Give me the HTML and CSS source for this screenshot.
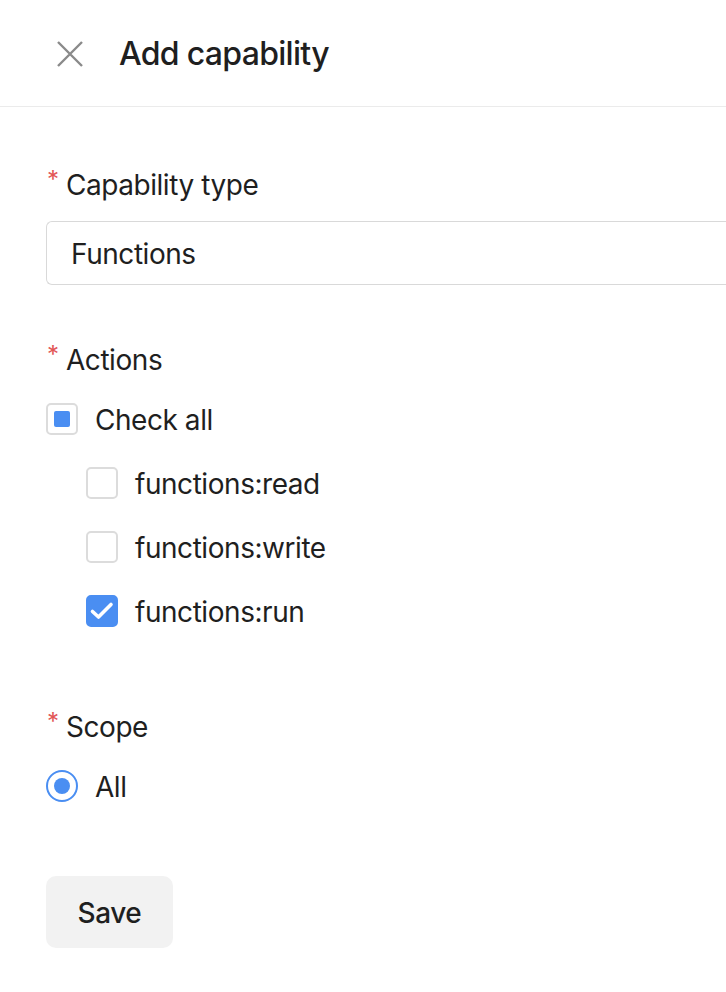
FILE: index.html
```html
<!DOCTYPE html>
<html lang="en">
<head>
<meta charset="utf-8">
<title>Add capability</title>
<link rel="stylesheet" href="styles.css">
</head>
<body>
<div class="panel">
  <header class="header">
    <button class="close" aria-label="Close">
      <svg width="26" height="26" viewBox="0 0 26 26"><path d="M1 1 L25 25 M25 1 L1 25" stroke="#8a8a8a" stroke-width="2.4" stroke-linecap="butt" fill="none"/></svg>
    </button>
    <h1 class="title">Add capability</h1>
  </header>
  <form class="form">
    <div class="item item-type">
      <div class="label"><span class="req">*</span>Capability type</div>
      <div class="select">Functions</div>
    </div>
    <div class="item item-actions">
      <div class="label"><span class="req">*</span>Actions</div>
      <div class="options">
        <label class="row"><span class="box indeterminate"><span class="dot-sq"></span></span><span>Check all</span></label>
        <div class="children">
          <label class="row"><span class="box"></span><span>functions:read</span></label>
          <label class="row"><span class="box"></span><span>functions:write</span></label>
          <label class="row"><span class="box checked"><svg width="32" height="32" viewBox="0 0 32 32"><path d="M6.5 16.5 L12.5 22 L25 9.5" stroke="#fff" stroke-width="3.6" fill="none" stroke-linecap="round" stroke-linejoin="round"/></svg></span><span>functions:run</span></label>
        </div>
      </div>
    </div>
    <div class="item item-scope">
      <div class="label"><span class="req">*</span>Scope</div>
      <div class="options">
        <label class="row"><span class="radio"><span class="radio-dot"></span></span><span>All</span></label>
      </div>
    </div>
    <button type="button" class="save">Save</button>
  </form>
</div>
</body>
</html>
```
FILE: styles.css
```css
html, body {
  margin: 0;
  padding: 0;
  background: #fff;
  overflow: hidden;
}
body {
  font-family: "Inter", "Liberation Sans", sans-serif;
  color: #1f1f1f;
  letter-spacing: -0.45px;
}
.panel {
  width: 726px;
  overflow: hidden;
}
.header {
  height: 106px;
  border-bottom: 1px solid #ebebeb;
  display: flex;
  align-items: center;
  padding-left: 56px;
}
.close {
  border: 0;
  background: none;
  padding: 0;
  width: 27px;
  height: 27px;
  display: flex;
  align-items: center;
  justify-content: center;
  margin-top: 1px;
}
.title {
  margin: 1px 0 0 36px;
  font-size: 32px;
  font-weight: 500;
  line-height: 40px;
  letter-spacing: -0.7px;
  color: #1f1f1f;
}
.form {
  padding: 58px 0 0 46px;
}
.label {
  position: relative;
  font-size: 28px;
  line-height: 40px;
  padding-left: 20px;
}
.req {
  position: absolute;
  left: 1px;
  top: -5px;
  color: #e25656;
  font-size: 24px;
  line-height: 40px;
}
.item-type .select {
  margin-top: 16px;
  width: 700px;
  height: 62px;
  border: 1px solid #d9d9d9;
  border-right: 0;
  border-radius: 6px 0 0 6px;
  display: flex;
  align-items: center;
  padding-left: 24px;
  padding-top: 2px;
  box-sizing: border-box;
  height: 64px;
  font-size: 28px;
}
.item-actions {
  margin-top: 55px;
}
.options {
  margin-top: 7px;
}
.row {
  display: flex;
  align-items: center;
  height: 64px;
  font-size: 28px;
  gap: 17px;
}
.row > span:last-child {
  padding-top: 1px;
}
.children {
  padding-left: 40px;
}
.box {
  position: relative;
  width: 32px;
  height: 32px;
  box-sizing: border-box;
  border: 2px solid #dcdcdc;
  border-radius: 5px;
  display: flex;
  align-items: center;
  justify-content: center;
  flex: none;
}
.box.checked {
  background: #4a8ef2;
  border-color: #4a8ef2;
}
.box.checked svg {
  position: absolute;
  left: -2px;
  top: -2px;
}
.dot-sq {
  width: 16px;
  height: 16px;
  background: #4a8ef2;
  border-radius: 2px;
}
.item-scope {
  margin-top: 64px;
}
.radio {
  width: 32px;
  height: 32px;
  box-sizing: border-box;
  border: 2.5px solid #4a8ef2;
  border-radius: 50%;
  display: flex;
  align-items: center;
  justify-content: center;
  flex: none;
}
.radio-dot {
  width: 16px;
  height: 16px;
  background: #4a8ef2;
  border-radius: 50%;
}
.save {
  margin-top: 58px;
  width: 127px;
  height: 72px;
  border: 0;
  border-radius: 10px;
  background: #f2f2f2;
  font-family: "Inter", "Liberation Sans", sans-serif;
  font-size: 28px;
  font-weight: 500;
  letter-spacing: -0.45px;
  color: #1f1f1f;
  padding: 2px 0 0;
}
```
